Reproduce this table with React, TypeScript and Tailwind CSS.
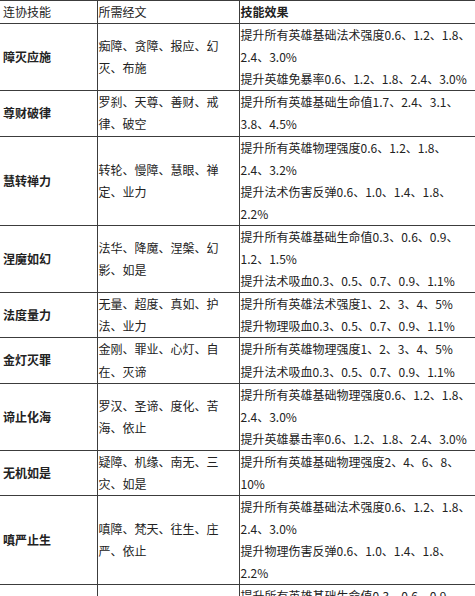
type Row = {
  name: string;
  scrolls: string[];
  effects: string[];
};

const rows: Row[] = [
  {
    name: "障灭应施",
    scrolls: ["痴障、贪障、报应、幻", "灭、布施"],
    effects: ["提升所有英雄基础法术强度0.6、1.2、1.8、", "2.4、3.0%", "提升英雄免暴率0.6、1.2、1.8、2.4、3.0%"],
  },
  {
    name: "尊财破律",
    scrolls: ["罗刹、天尊、善财、戒", "律、破空"],
    effects: ["提升所有英雄基础生命值1.7、2.4、3.1、", "3.8、4.5%"],
  },
  {
    name: "慧转禅力",
    scrolls: ["转轮、慢障、慧眼、禅", "定、业力"],
    effects: ["提升所有英雄物理强度0.6、1.2、1.8、", "2.4、3.2%", "提升法术伤害反弹0.6、1.0、1.4、1.8、", "2.2%"],
  },
  {
    name: "涅魔如幻",
    scrolls: ["法华、降魔、涅槃、幻", "影、如是"],
    effects: ["提升所有英雄基础生命值0.3、0.6、0.9、", "1.2、1.5%", "提升法术吸血0.3、0.5、0.7、0.9、1.1%"],
  },
  {
    name: "法度量力",
    scrolls: ["无量、超度、真如、护", "法、业力"],
    effects: ["提升所有英雄法术强度1、2、3、4、5%", "提升物理吸血0.3、0.5、0.7、0.9、1.1%"],
  },
  {
    name: "金灯灭罪",
    scrolls: ["金刚、罪业、心灯、自", "在、灭谛"],
    effects: ["提升所有英雄物理强度1、2、3、4、5%", "提升法术吸血0.3、0.5、0.7、0.9、1.1%"],
  },
  {
    name: "谛止化海",
    scrolls: ["罗汉、圣谛、度化、苦", "海、依止"],
    effects: ["提升所有英雄基础物理强度0.6、1.2、1.8、", "2.4、3.0%", "提升英雄暴击率0.6、1.2、1.8、2.4、3.0%"],
  },
  {
    name: "无机如是",
    scrolls: ["疑障、机缘、南无、三", "灾、如是"],
    effects: ["提升所有英雄基础物理强度2、4、6、8、", "10%"],
  },
  {
    name: "嗔严止生",
    scrolls: ["嗔障、梵天、往生、庄", "严、依止"],
    effects: ["提升所有英雄基础法术强度0.6、1.2、1.8、", "2.4、3.0%", "提升物理伤害反弹0.6、1.0、1.4、1.8、", "2.2%"],
  },
  {
    name: "生命如是",
    scrolls: ["生命、如是、涅槃、法", "华、真如"],
    effects: ["提升所有英雄基础生命值0.3、0.6、0.9、", "1.2、1.5%", "提升物理吸血0.3、0.5、0.7、0.9、1.1%"],
  },
];

function Lines({ lines }: { lines: string[] }) {
  return (
    <>
      {lines.map((line, i) => (
        <div key={i} className="whitespace-nowrap">
          {line}
        </div>
      ))}
    </>
  );
}

export default function App() {
  return (
    <div
      className="w-[475px] bg-white text-[12px] leading-[22.1px] text-[#222]"
      style={{ fontFamily: '"Noto Sans CJK SC", "Noto Sans", sans-serif' }}
    >
      <table className="w-[475px] table-fixed border-collapse">
        <colgroup>
          <col className="w-[97px]" />
          <col className="w-[142px]" />
          <col className="w-[236px]" />
        </colgroup>
        <thead>
          <tr>
            <th className="border border-l-0 border-[#3c3c3c] pl-[3px] text-left align-middle font-normal">连协技能</th>
            <th className="border border-[#3c3c3c] pl-[1px] text-left align-middle font-normal">所需经文</th>
            <th className="border border-[#3c3c3c] pl-[1px] text-left align-middle font-semibold">技能效果</th>
          </tr>
        </thead>
        <tbody>
          {rows.map((row) => (
            <tr key={row.name}>
              <td className="border border-l-0 border-[#3c3c3c] pl-[3px] align-middle font-bold">{row.name}</td>
              <td className="border border-[#3c3c3c] pl-[1px] align-middle">
                <Lines lines={row.scrolls} />
              </td>
              <td className="border border-[#3c3c3c] pl-[1px] align-top">
                <Lines lines={row.effects} />
              </td>
            </tr>
          ))}
        </tbody>
      </table>
    </div>
  );
}
